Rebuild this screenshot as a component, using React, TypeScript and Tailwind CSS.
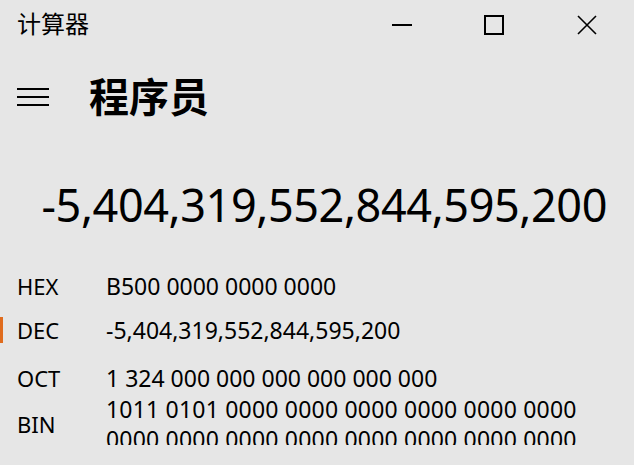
import React from 'react';

const rows = [
  { label: 'HEX', value: 'B500 0000 0000 0000', pad: '' },
  { label: 'DEC', value: '-5,404,319,552,844,595,200', active: true, pad: '' },
  { label: 'OCT', value: '1 324 000 000 000 000 000 000', pad: 'pt-[8px]' },
];

const binLines = [
  '1011 0101 0000 0000 0000 0000 0000 0000',
  '0000 0000 0000 0000 0000 0000 0000 0000',
];

export default function App() {
  return (
    <div
      className="w-[634px] h-[465px] bg-[#e6e6e6] text-black overflow-hidden flex flex-col"
      style={{ fontFamily: '"Noto Sans", "Noto Sans CJK SC", sans-serif' }}
    >
      {/* Title bar */}
      <div className="h-[49px] flex items-center shrink-0">
        <div className="pl-[17px] text-[24px] leading-none flex-1 -mt-[1px]">计算器</div>
        <div className="flex h-full">
          <button className="w-[92px] h-full flex items-center justify-center">
            <svg width="20" height="20" viewBox="0 0 20 20">
              <rect x="0" y="9" width="20" height="2" fill="#000" />
            </svg>
          </button>
          <button className="w-[92px] h-full flex items-center justify-center">
            <svg width="20" height="20" viewBox="0 0 20 20">
              <rect x="1" y="1" width="18" height="18" fill="none" stroke="#000" strokeWidth="2" />
            </svg>
          </button>
          <button className="w-[94px] h-full flex items-center justify-center">
            <svg width="20" height="20" viewBox="0 0 20 20">
              <path d="M1 1 L19 19 M19 1 L1 19" stroke="#000" strokeWidth="1.6" fill="none" />
            </svg>
          </button>
        </div>
      </div>

      {/* Header */}
      <div className="h-[96px] flex items-center pl-[17px] gap-[40px] shrink-0">
        <svg width="32" height="20" viewBox="0 0 32 20">
          <rect x="0" y="1" width="32" height="2" fill="#000" />
          <rect x="0" y="9" width="32" height="2" fill="#000" />
          <rect x="0" y="17" width="32" height="2" fill="#000" />
        </svg>
        <div className="text-[40px] font-bold leading-none">程序员</div>
      </div>

      {/* Display */}
      <div className="h-[119px] flex items-center justify-end pr-[27px] shrink-0">
        <div className="text-[45px] leading-none tracking-[-0.4px]">-5,404,319,552,844,595,200</div>
      </div>

      {/* Radix rows */}
      <div className="flex flex-col text-[23px]">
        {rows.map((r) => (
          <div key={r.label} className={`h-[44px] flex items-center ${r.pad}`}>
            <div className={`w-[3px] h-[26px] ${r.active ? 'bg-[#e06c1e]' : ''}`} />
            <div className="w-[103px] pl-[14px] text-[22px]">{r.label}</div>
            <div>{r.value}</div>
          </div>
        ))}
        <div className="h-[51px] -mt-[2px] overflow-hidden">
          <div className="flex items-center h-[60px]">
            <div className="w-[106px] pl-[17px] text-[22px]">BIN</div>
            <div className="flex flex-col tracking-[0.2px]">
              {binLines.map((l) => (
                <div key={l} className="leading-[30px]">
                  {l}
                </div>
              ))}
            </div>
          </div>
        </div>
      </div>
    </div>
  );
}
